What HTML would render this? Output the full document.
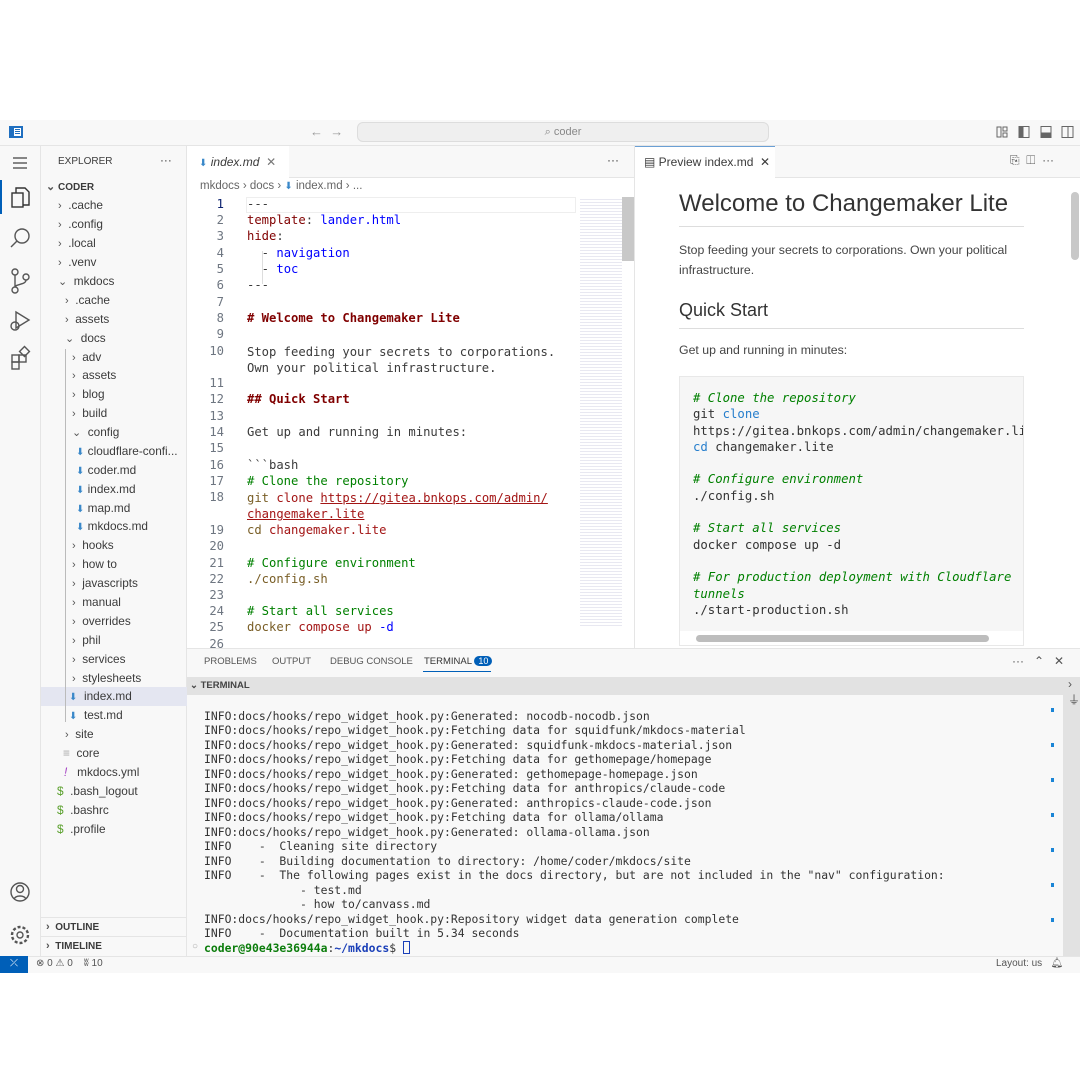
<!DOCTYPE html>
<html><head><meta charset="utf-8"><style>
*{margin:0;padding:0;box-sizing:border-box}
body{width:1080px;height:1080px;background:#fff;position:relative;overflow:hidden;font-family:"Liberation Sans",sans-serif;color:#3b3b3b}
.a{position:absolute}
.mono{font-family:"DejaVu Sans Mono","Liberation Mono",monospace}
.side div{position:absolute;font-size:11.8px;color:#3b3b3b;white-space:nowrap}
.chev{color:#555;font-size:11px}
.ln{position:absolute;left:190px;width:34px;text-align:right;font-size:12.2px;color:#6e7681}
.cl{position:absolute;left:247px;font-size:12.2px;white-space:pre;color:#3b3b3b}
.term div{position:absolute;left:204px;font-size:11.4px;white-space:pre;color:#333}
.mk{color:#3a88c9;font-size:10px}
</style></head><body>
<div class="a" style="left:0;top:120px;width:1080px;height:26px;background:#f8f8f8;border-bottom:1px solid #e5e5e5"></div>
<svg class="a" style="left:9px;top:126px" width="14" height="12"><rect x="0" y="0" width="14" height="12" fill="#1f6fc0"/><rect x="5" y="2" width="7" height="8" fill="#fff"/><rect x="6" y="3" width="5" height="1" fill="#1f6fc0"/><rect x="6" y="5" width="5" height="1" fill="#1f6fc0"/><rect x="6" y="7" width="5" height="1" fill="#1f6fc0"/></svg>
<div class="a" style="left:310px;top:124px;color:#999;font-size:13px">← &nbsp;→</div>
<div class="a" style="left:357px;top:122px;width:412px;height:20px;background:#efefef;border:1px solid #ddd;border-radius:6px;font-size:11px;color:#888;text-align:center;line-height:18px">⌕ coder</div>
<svg class="a" style="left:996px;top:126px" width="80" height="12" fill="none" stroke="#666"><rect x="1" y="1" width="4" height="10"/><rect x="7" y="1" width="4" height="4"/><rect x="7" y="7" width="4" height="4"/><rect x="23" y="0.5" width="10" height="11"/><rect x="23" y="0.5" width="4" height="11" fill="#666"/><rect x="45" y="0.5" width="10" height="11"/><rect x="45" y="7" width="10" height="4.5" fill="#666"/><rect x="66" y="0.5" width="11" height="11"/><line x1="72" y1="0" x2="72" y2="12"/></svg>
<div class="a" style="left:0;top:146px;width:41px;height:810px;background:#f8f8f8;border-right:1px solid #e5e5e5"></div>
<div class="a" style="left:0;top:180px;width:2px;height:34px;background:#005fb8"></div>
<svg class="a" style="left:8px;top:150px" width="26" height="800" fill="none" stroke="#555" stroke-width="1.4">
<line x1="5" y1="8" x2="19" y2="8"/><line x1="5" y1="13" x2="19" y2="13"/><line x1="5" y1="18" x2="19" y2="18"/>
<rect x="4" y="43" width="11" height="14" stroke="#333"/><path d="M8 43V38h9l4 4v13h-6" stroke="#333"/>
<circle cx="14" cy="86" r="7"/><line x1="9" y1="91" x2="3" y2="97"/>
<circle cx="7" cy="122" r="3"/><circle cx="7" cy="140" r="3"/><circle cx="18" cy="127" r="3"/><path d="M7 125v12M18 130c0 5-11 4-11 7"/>
<path d="M8 162l13 8-13 8z"/><circle cx="7" cy="176" r="4"/>
<rect x="4" y="205" width="7" height="7"/><rect x="11" y="205" width="7" height="7"/><rect x="4" y="212" width="7" height="7"/><rect x="13" y="198" width="7" height="7" transform="rotate(45 16.5 201.5)"/>
<circle cx="12" cy="742" r="9"/><circle cx="12" cy="739" r="3.5"/><path d="M6 749c2-4 10-4 12 0"/>
<circle cx="12" cy="785" r="3"/><circle cx="12" cy="785" r="8" stroke-dasharray="3 2" stroke-width="2.4"/>
</svg>
<div class="a" style="left:41px;top:146px;width:146px;height:810px;background:#f8f8f8;border-right:1px solid #e5e5e5"></div>
<div class="a" style="left:41px;top:687px;width:146px;height:19px;background:#e4e6f1"></div>
<div class="a" style="left:41px;top:917px;width:146px;height:1px;background:#e5e5e5"></div>
<div class="a" style="left:41px;top:936px;width:146px;height:1px;background:#e5e5e5"></div>
<div class="a" style="left:65px;top:349px;width:1px;height:373px;background:#bbb"></div>
<div class="side">
<div style="left:58px;top:156px;font-size:10px">EXPLORER</div><div style="left:160px;top:153px">···</div>
<div style="left:46px;top:180px;font-weight:bold;font-size:10px"><span class="chev">⌄</span> CODER</div>
<div style="left:58px;top:198px"><span class="chev">›</span>&nbsp; .cache</div>
<div style="left:58px;top:217px"><span class="chev">›</span>&nbsp; .config</div>
<div style="left:58px;top:236px"><span class="chev">›</span>&nbsp; .local</div>
<div style="left:58px;top:255px"><span class="chev">›</span>&nbsp; .venv</div>
<div style="left:58px;top:274px"><span class="chev">⌄</span>&nbsp; mkdocs</div>
<div style="left:65px;top:293px"><span class="chev">›</span>&nbsp; .cache</div>
<div style="left:65px;top:312px"><span class="chev">›</span>&nbsp; assets</div>
<div style="left:65px;top:331px"><span class="chev">⌄</span>&nbsp; docs</div>
<div style="left:72px;top:350px"><span class="chev">›</span>&nbsp; adv</div>
<div style="left:72px;top:368px"><span class="chev">›</span>&nbsp; assets</div>
<div style="left:72px;top:387px"><span class="chev">›</span>&nbsp; blog</div>
<div style="left:72px;top:406px"><span class="chev">›</span>&nbsp; build</div>
<div style="left:72px;top:425px"><span class="chev">⌄</span>&nbsp; config</div>
<div style="left:76px;top:444px"><span class="mk">⬇</span> cloudflare-confi...</div>
<div style="left:76px;top:463px"><span class="mk">⬇</span> coder.md</div>
<div style="left:76px;top:482px"><span class="mk">⬇</span> index.md</div>
<div style="left:76px;top:501px"><span class="mk">⬇</span> map.md</div>
<div style="left:76px;top:519px"><span class="mk">⬇</span> mkdocs.md</div>
<div style="left:72px;top:538px"><span class="chev">›</span>&nbsp; hooks</div>
<div style="left:72px;top:557px"><span class="chev">›</span>&nbsp; how to</div>
<div style="left:72px;top:576px"><span class="chev">›</span>&nbsp; javascripts</div>
<div style="left:72px;top:595px"><span class="chev">›</span>&nbsp; manual</div>
<div style="left:72px;top:614px"><span class="chev">›</span>&nbsp; overrides</div>
<div style="left:72px;top:633px"><span class="chev">›</span>&nbsp; phil</div>
<div style="left:72px;top:652px"><span class="chev">›</span>&nbsp; services</div>
<div style="left:72px;top:671px"><span class="chev">›</span>&nbsp; stylesheets</div>
<div style="left:69px;top:689px"><span class="mk">⬇</span>&nbsp; index.md</div>
<div style="left:69px;top:708px"><span class="mk">⬇</span>&nbsp; test.md</div>
<div style="left:65px;top:727px"><span class="chev">›</span>&nbsp; site</div>
<div style="left:63px;top:746px"><span style="color:#aaa">≡</span>&nbsp; core</div>
<div style="left:64px;top:765px"><span style="color:#a33fc2;font-style:italic">!</span>&nbsp;&nbsp; mkdocs.yml</div>
<div style="left:57px;top:784px"><span style="color:#5aa02c">$</span>&nbsp; .bash_logout</div>
<div style="left:57px;top:803px"><span style="color:#5aa02c">$</span>&nbsp; .bashrc</div>
<div style="left:57px;top:822px"><span style="color:#5aa02c">$</span>&nbsp; .profile</div>
<div style="left:46px;top:921px;font-weight:bold;font-size:10px"><span class="chev">›</span>&nbsp; OUTLINE</div>
<div style="left:46px;top:940px;font-weight:bold;font-size:10px"><span class="chev">›</span>&nbsp; TIMELINE</div>
</div>
<div class="a" style="left:187px;top:146px;width:893px;height:32px;background:#f8f8f8;border-bottom:1px solid #e5e5e5"></div>
<div class="a" style="left:187px;top:146px;width:102px;height:32px;background:#fff;font-size:12px;font-style:italic;padding:9px 0 0 12px"><span class="mk" style="font-style:normal">⬇</span> index.md &nbsp;<span style="font-style:normal;color:#777">✕</span></div>
<div class="a" style="left:607px;top:153px;font-size:12px">···</div>
<div class="a" style="left:634px;top:146px;width:1px;height:510px;background:#e5e5e5"></div>
<div class="a" style="left:635px;top:146px;width:140px;height:33px;background:#fff;border-top:1px solid #6a9fd4;font-size:12px;padding:8px 0 0 9px">▤ Preview index.md &nbsp;✕</div>
<div class="a" style="left:1010px;top:153px;font-size:12px;color:#555">⎘ &nbsp;◫ &nbsp;···</div>
<div class="a" style="left:187px;top:179px;width:447px;height:470px;background:#fff"></div>
<div class="a" style="left:200px;top:180px;font-size:11.5px;color:#666">mkdocs › docs › <span class="mk">⬇</span> index.md › ...</div>
<div class="a" style="left:246px;top:197px;width:330px;height:16px;border:1px solid #eee"></div>
<div class="a" style="left:622px;top:197px;width:12px;height:64px;background:#c8c8c8"></div>
<div class="a" style="left:580px;top:197px;width:42px;height:430px;background:repeating-linear-gradient(#fff 0 2px,#d8d8e8 2px 3px);opacity:.6"></div>
<div class="a" style="left:262px;top:251px;width:1px;height:33px;background:#ddd"></div>
<div class="mono">
<div class="ln" style="top:197px;color:#0b216f">1</div><div class="cl" style="top:197px">---</div>
<div class="ln" style="top:213px">2</div><div class="cl" style="top:213px"><span style="color:#800000">template</span>: <span style="color:#0000ff">lander.html</span></div>
<div class="ln" style="top:229px">3</div><div class="cl" style="top:229px"><span style="color:#800000">hide</span>:</div>
<div class="ln" style="top:246px">4</div><div class="cl" style="top:246px">  - <span style="color:#0000ff">navigation</span></div>
<div class="ln" style="top:262px">5</div><div class="cl" style="top:262px">  - <span style="color:#0000ff">toc</span></div>
<div class="ln" style="top:278px">6</div><div class="cl" style="top:278px">---</div>
<div class="ln" style="top:295px">7</div>
<div class="ln" style="top:311px">8</div><div class="cl" style="top:311px;color:#800000;font-weight:bold"># Welcome to Changemaker Lite</div>
<div class="ln" style="top:327px">9</div>
<div class="ln" style="top:344px">10</div><div class="cl" style="top:344px;line-height:16.3px">Stop feeding your secrets to corporations.
Own your political infrastructure.</div>
<div class="ln" style="top:376px">11</div>
<div class="ln" style="top:392px">12</div><div class="cl" style="top:392px;color:#800000;font-weight:bold">## Quick Start</div>
<div class="ln" style="top:409px">13</div>
<div class="ln" style="top:425px">14</div><div class="cl" style="top:425px">Get up and running in minutes:</div>
<div class="ln" style="top:441px">15</div>
<div class="ln" style="top:458px">16</div><div class="cl" style="top:458px">&#96;&#96;&#96;bash</div>
<div class="ln" style="top:474px">17</div><div class="cl" style="top:474px;color:#008000"># Clone the repository</div>
<div class="ln" style="top:490px">18</div><div class="cl" style="top:490px;color:#795e26;line-height:16.3px"><span>git</span> <span style="color:#a31515">clone</span> <span style="color:#a31515;text-decoration:underline">https://gitea.bnkops.com/admin/</span>
<span style="color:#a31515;text-decoration:underline">changemaker.lite</span></div>
<div class="ln" style="top:523px">19</div><div class="cl" style="top:523px;color:#795e26">cd <span style="color:#a31515">changemaker.lite</span></div>
<div class="ln" style="top:539px">20</div>
<div class="ln" style="top:556px">21</div><div class="cl" style="top:556px;color:#008000"># Configure environment</div>
<div class="ln" style="top:572px">22</div><div class="cl" style="top:572px;color:#795e26">./config.sh</div>
<div class="ln" style="top:588px">23</div>
<div class="ln" style="top:604px">24</div><div class="cl" style="top:604px;color:#008000"># Start all services</div>
<div class="ln" style="top:620px">25</div><div class="cl" style="top:620px;color:#795e26">docker <span style="color:#a31515">compose up</span> <span style="color:#0000ff">-d</span></div>
<div class="ln" style="top:637px">26</div>
</div>
<div class="a" style="left:635px;top:179px;width:445px;height:470px;background:#fff"></div>
<div class="a" style="left:1071px;top:192px;width:8px;height:68px;background:#c8c8c8;border-radius:4px"></div>
<div class="a" style="left:679px;top:190px;font-size:24px;color:#333">Welcome to Changemaker Lite</div>
<div class="a" style="left:679px;top:226px;width:345px;height:1px;background:#ddd"></div>
<div class="a" style="left:679px;top:240px;font-size:12.3px;line-height:20px;color:#444;width:345px">Stop feeding your secrets to corporations. Own your political infrastructure.</div>
<div class="a" style="left:679px;top:300px;font-size:18px;color:#333">Quick Start</div>
<div class="a" style="left:679px;top:328px;width:345px;height:1px;background:#ddd"></div>
<div class="a" style="left:679px;top:343px;font-size:12.3px;color:#444">Get up and running in minutes:</div>
<div class="a" style="left:679px;top:376px;width:345px;height:270px;background:#f6f6f6;border:1px solid #e8e8e8;overflow:hidden">
<div class="mono" style="position:absolute;left:13px;top:13px;font-size:12.3px;line-height:16.3px;white-space:pre;color:#333"><span style="color:#008000;font-style:italic"># Clone the repository</span>
git <span style="color:#267ecc">clone</span>
https://gitea.bnkops.com/admin/changemaker.lite
<span style="color:#267ecc">cd</span> changemaker.lite

<span style="color:#008000;font-style:italic"># Configure environment</span>
./config.sh

<span style="color:#008000;font-style:italic"># Start all services</span>
docker compose up -d

<span style="color:#008000;font-style:italic"># For production deployment with Cloudflare</span>
<span style="color:#008000;font-style:italic">tunnels</span>
./start-production.sh</div>
<div class="a" style="left:0;top:254px;width:345px;height:16px;background:#fff"></div>
<div class="a" style="left:16px;top:258px;width:293px;height:7px;background:#bdbdbd;border-radius:4px"></div>
</div>
<div class="a" style="left:187px;top:648px;width:893px;height:308px;background:#f8f8f8;border-top:1px solid #e5e5e5"></div>
<div class="a" style="left:204px;top:656px;font-size:9.5px;color:#555">PROBLEMS</div>
<div class="a" style="left:272px;top:656px;font-size:9.5px;color:#555">OUTPUT</div>
<div class="a" style="left:330px;top:656px;font-size:9.5px;color:#555">DEBUG CONSOLE</div>
<div class="a" style="left:424px;top:656px;font-size:9.5px;color:#333">TERMINAL <span style="background:#005fb8;color:#fff;border-radius:7px;padding:0 4px;font-size:9px">10</span></div>
<div class="a" style="left:423px;top:671px;width:68px;height:1px;background:#005fb8"></div>
<div class="a" style="left:1012px;top:654px;font-size:12px;color:#555">··· &nbsp; ⌃ &nbsp; ✕</div>
<div class="a" style="left:187px;top:677px;width:893px;height:18px;background:#e2e2e2"></div>
<div class="a" style="left:190px;top:680px;font-size:9.5px;font-weight:bold;color:#444">⌄ TERMINAL</div>
<div class="a" style="left:1063px;top:677px;width:17px;height:279px;background:#e2e2e2;font-size:12px;padding-left:5px;color:#555">›<br>⏚</div>
<div class="a" style="left:1051px;top:708px;width:3px;height:233px;background:repeating-linear-gradient(#1a85d6 0 4px,transparent 4px 35px)"></div>
<div class="term mono">
<div style="top:709px">INFO:docs/hooks/repo_widget_hook.py:Generated: nocodb-nocodb.json</div>
<div style="top:723px">INFO:docs/hooks/repo_widget_hook.py:Fetching data for squidfunk/mkdocs-material</div>
<div style="top:738px">INFO:docs/hooks/repo_widget_hook.py:Generated: squidfunk-mkdocs-material.json</div>
<div style="top:752px">INFO:docs/hooks/repo_widget_hook.py:Fetching data for gethomepage/homepage</div>
<div style="top:767px">INFO:docs/hooks/repo_widget_hook.py:Generated: gethomepage-homepage.json</div>
<div style="top:781px">INFO:docs/hooks/repo_widget_hook.py:Fetching data for anthropics/claude-code</div>
<div style="top:796px">INFO:docs/hooks/repo_widget_hook.py:Generated: anthropics-claude-code.json</div>
<div style="top:810px">INFO:docs/hooks/repo_widget_hook.py:Fetching data for ollama/ollama</div>
<div style="top:825px">INFO:docs/hooks/repo_widget_hook.py:Generated: ollama-ollama.json</div>
<div style="top:839px">INFO    -  Cleaning site directory</div>
<div style="top:854px">INFO    -  Building documentation to directory: /home/coder/mkdocs/site</div>
<div style="top:868px">INFO    -  The following pages exist in the docs directory, but are not included in the "nav" configuration:</div>
<div style="top:883px">              - test.md</div>
<div style="top:897px">              - how to/canvass.md</div>
<div style="top:912px">INFO:docs/hooks/repo_widget_hook.py:Repository widget data generation complete</div>
<div style="top:926px">INFO    -  Documentation built in 5.34 seconds</div>
<div style="top:941px"><b style="color:#0c7d0c">coder@90e43e36944a</b>:<b style="color:#1a3fb8">~/mkdocs</b>$ <span style="display:inline-block;width:7px;height:13px;border:1px solid #1a3fb8;vertical-align:-2px"></span></div>
</div>
<div class="a" style="left:192px;top:941px;font-size:10px;color:#aaa">○</div>
<div class="a" style="left:0;top:956px;width:1080px;height:17px;background:#f8f8f8;border-top:1px solid #e5e5e5"></div>
<div class="a" style="left:0;top:956px;width:28px;height:17px;background:#005fb8;color:#fff;font-size:10px;text-align:center;line-height:16px">⤫</div>
<div class="a" style="left:36px;top:958px;font-size:10px;color:#555">⊗ 0 ⚠ 0 &nbsp;&nbsp;&nbsp;ʬ 10</div>
<div class="a" style="left:996px;top:958px;font-size:10px;color:#555">Layout: us &nbsp;&nbsp;🔔︎</div>
</body></html>
